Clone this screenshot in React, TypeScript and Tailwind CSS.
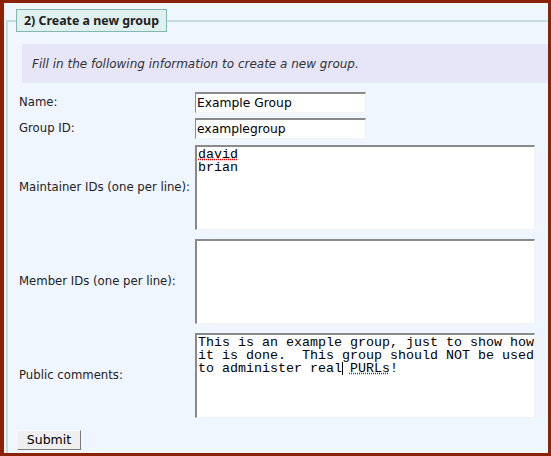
import React from "react";

const pageFont = { fontFamily: "'DejaVu Sans', 'Noto Sans', sans-serif" };

const Row: React.FC<{ label: string; className?: string; children: React.ReactNode }> = (props) => {
  return (
    <div className={`flex items-center ${props.className ?? ""}`}>
      <div className="w-[179px] shrink-0 pl-[3px] text-[11.7px] text-[#222]">{props.label}</div>
      {props.children}
    </div>
  );
};

const TextBox: React.FC<{ value: string }> = ({ value }) => {
  return (
    <div className="w-[171px] h-[21px] shrink-0 bg-white border-t-2 border-l border-[#8a8a8a] border-r border-b border-r-[#f2f2f2] border-b-[#f2f2f2] pl-[1px] flex items-center text-[12.3px] text-black">
      {value}
    </div>
  );
};

const Area: React.FC<{ children?: React.ReactNode; className?: string }> = (props) => {
  return (
    <div
      className={`w-[340px] h-[85px] shrink-0 bg-white border-t-2 border-l-2 border-[#8a8a8a] border-r border-b border-r-[#f2f2f2] border-b-[#f2f2f2] pl-[1px] pt-[1px] text-[13.33px] leading-[13px] text-black font-['Liberation_Mono',monospace] overflow-hidden ${props.className ?? ""}`}
    >
      {props.children}
    </div>
  );
};

const Line: React.FC<{ children?: React.ReactNode }> = ({ children }) => (
  <div className="h-[13px] whitespace-pre">{children}</div>
);

const Misspelled: React.FC<{ children: React.ReactNode }> = ({ children }) => (
  <span className="inline-block h-[13px] leading-[13px] underline decoration-dotted decoration-[#e00000] underline-offset-[1px]">
    {children}
  </span>
);

const App: React.FC = () => {
  return (
    <div className="w-[551px] h-[456px] overflow-hidden bg-[#8a2208] pt-[3px] pl-[4px] pr-[3px] pb-[3px]" style={pageFont}>
      <div className="h-full overflow-hidden bg-[#f0f6ff] pl-[2px] pt-[6px]">
        <fieldset className="w-[600px] border-2 border-[#c4dede] pl-[8px]">
          <legend className="border border-[#80b8b0] bg-[#e0f0ef] px-[7px] py-[4px] leading-[13px] text-[12.4px] font-bold text-[#222] font-['Noto_Sans',sans-serif]">
            2) Create a new group
          </legend>
          <div className="mt-[12px] ml-[6px] h-[39px] bg-[#e6e6f8] pl-[10px] flex items-center text-[12px] italic text-[#333]">
            Fill in the following information to create a new group.
          </div>
          <Row label="Name:" className="mt-[9px]">
            <TextBox value="Example Group" />
          </Row>
          <Row label="Group ID:" className="mt-[5px]">
            <TextBox value="examplegroup" />
          </Row>
          <Row label="Maintainer IDs (one per line):" className="mt-[6px]">
            <Area className="h-[84px]">
              <Line>
                <Misspelled>david</Misspelled>
              </Line>
              <Line>brian</Line>
            </Area>
          </Row>
          <Row label="Member IDs (one per line):" className="mt-[9px]">
            <Area />
          </Row>
          <Row label="Public comments:" className="mt-[9px]">
            <Area>
              <Line>This is an example group, just to show how</Line>
              <Line>it is done.  This group should NOT be used</Line>
              <Line>
                {"to administer real"}
                <span className="inline-block w-0 h-[13px] align-top border-l border-black -mr-px" />
                {" "}
                <Misspelled>PURLs</Misspelled>
                {"!"}
              </Line>
            </Area>
          </Row>
          <div className="mt-[9px] ml-[1px] pb-[20px]">
            <button className="w-[64px] h-[20px] bg-[#efefef] border border-t-[#fafafa] border-l-[#fafafa] border-r-[#7a7a7a] border-b-[#7a7a7a] text-[12.5px] text-black leading-none">
              Submit
            </button>
          </div>
        </fieldset>
      </div>
    </div>
  );
};

export default App;
